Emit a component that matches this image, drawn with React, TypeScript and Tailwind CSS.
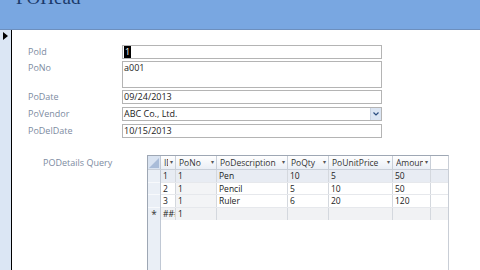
const font = { fontFamily: '"Open Sans", "Noto Sans", sans-serif' };

const fields = [
  { label: "PoId", value: "1", h: "h-[14px]", mt: "mt-0", selected: true },
  { label: "PoNo", value: "a001", h: "h-[27px]", mt: "mt-[2px]" },
  { label: "PoDate", value: "09/24/2013", h: "h-[14px]", mt: "mt-[2px]" },
  { label: "PoVendor", value: "ABC Co., Ltd.", h: "h-[14px]", mt: "mt-[3px]", combo: true },
  { label: "PoDelDate", value: "10/15/2013", h: "h-[14px]", mt: "mt-[3px]" },
];

const cols = [
  { name: "ID", w: "w-[15px]" },
  { name: "PoNo", w: "w-[41px]" },
  { name: "PoDescription", w: "w-[71px]" },
  { name: "PoQty", w: "w-[41px]" },
  { name: "PoUnitPrice", w: "w-[64px]" },
  { name: "Amount", w: "w-[38px]" },
];

const rows = [
  ["1", "1", "Pen", "10", "5", "50"],
  ["2", "1", "Pencil", "5", "10", "50"],
  ["3", "1", "Ruler", "6", "20", "120"],
];

function Cell({ w, text, bg }: { w: string; text: string; bg?: string }) {
  return (
    <div className={`${w} h-full shrink-0 border-r border-[#d4d8de] pl-[2px] overflow-hidden whitespace-nowrap leading-[12px] ${bg || ""}`}>
      {text}
    </div>
  );
}

export default function App() {
  return (
    <div className="w-[480px] h-[270px] overflow-hidden bg-white flex flex-col" style={font}>
      {/* Header */}
      <div className="h-[30px] shrink-0 bg-[#79a7e1] border-b border-[#6d8fbd] overflow-hidden relative">
        <div
          className="absolute left-[16px] top-[-12px] text-[19px] leading-none text-[#1b3a6b]"
          style={{ fontFamily: '"Liberation Serif", "DejaVu Serif", serif' }}
        >
          POHead
        </div>
      </div>

      <div className="flex flex-1 min-h-0">
        {/* record selector strip */}
        <div className="w-[12px] shrink-0 bg-[#dbe6f4] border-r border-black pt-[2px] pl-[3px]">
          <svg width="5" height="8" viewBox="0 0 5 8">
            <path d="M0 0 L5 4 L0 8 Z" fill="#000" />
          </svg>
        </div>

        {/* form */}
        <div className="flex-1 flex flex-col pt-[15px]">
          {fields.map((f) => (
            <div key={f.label} className={`flex ${f.mt}`}>
              <div className="w-[110px] pl-[16px] shrink-0 text-[9px] leading-[14px] text-[#7d8ba1]">{f.label}</div>
              <div className={`w-[260px] ${f.h} border border-[#b4b4b4] bg-white flex items-start pl-[1px] text-[9px] leading-[12px] text-[#222]`}>
                <span className={f.selected ? "bg-black text-white px-[1px]" : ""}>{f.value}</span>
                {f.combo && (
                  <div className="ml-auto w-[11px] h-full bg-[#dbe5f3] border-l border-[#c9d3e2] flex items-center justify-center">
                    <svg width="6" height="4" viewBox="0 0 6 4">
                      <path d="M0.5 0.5 L3 3 L5.5 0.5" fill="none" stroke="#2b4d80" strokeWidth="1.2" />
                    </svg>
                  </div>
                )}
              </div>
            </div>
          ))}

          {/* subform */}
          <div className="flex mt-[17px] flex-1 min-h-0">
            <div className="w-[135px] shrink-0 pl-[31px] pt-[1px] text-[9px] leading-[14px] text-[#7d8ba1]">PODetails Query</div>
            <div className="w-[302px] shrink-0 border-l border-t border-[#9ea7b4] border-r border-r-[#c9ced6] flex flex-col text-[8.5px] text-[#222] bg-white">
              {/* header row */}
              <div className="flex h-[14px] shrink-0 bg-white border-b border-[#c9cfd8]">
                <div className="w-[13px] h-full shrink-0 bg-[#d9e3f1] border-r border-[#c0c8d4] flex items-end justify-end p-[1px]">
                  <svg width="10" height="10" viewBox="0 0 10 10">
                    <path d="M10 0 L10 10 L0 10 Z" fill="#a9bcd8" />
                  </svg>
                </div>
                {cols.map((c) => (
                  <div key={c.name} className={`${c.w} h-full shrink-0 border-r border-[#c9cfd8] bg-gradient-to-b from-white to-[#eaeef5] flex items-center pl-[3px] pr-[2px] text-[#333]`}>
                    <span className="flex-1 overflow-hidden whitespace-nowrap leading-[12px]">{c.name}</span>
                    <span className="shrink-0 text-[6px] text-[#555] pl-[2px]">▾</span>
                  </div>
                ))}
              </div>

              <div className="flex flex-1 min-h-0">
                <div className="w-[13px] shrink-0 bg-[#eaeff6] border-r border-[#c0c8d4] flex flex-col">
                  {rows.map((r) => (
                    <div key={r[0]} className="h-[12.5px] border-b border-[#f7f9fc]" />
                  ))}
                  <div className="h-[12px] flex items-center justify-center text-[10px] leading-none text-[#333]">*</div>
                </div>
                <div className="flex-1 flex flex-col">
                  {rows.map((r, i) => (
                    <div key={r[0]} className={`flex h-[12.5px] border-b border-[#e6e8ec] ${i === 0 ? "bg-[#e8ecf3]" : "bg-white"}`}>
                      {cols.map((c, j) => (
                        <Cell key={c.name} w={c.w} text={r[j]} bg={j === 1 && i > 0 ? "bg-[#f3f4f6]" : ""} />
                      ))}
                    </div>
                  ))}
                  <div className="flex h-[12px] bg-[#f1f2f4]">
                    <Cell w="w-[15px]" text="###" />
                    <Cell w="w-[41px]" text="1" />
                    <Cell w="w-[71px]" text="" />
                    <Cell w="w-[41px]" text="" />
                    <Cell w="w-[64px]" text="" />
                    <Cell w="w-[38px]" text="" />
                  </div>
                </div>
              </div>
            </div>
          </div>
        </div>
      </div>
    </div>
  );
}
